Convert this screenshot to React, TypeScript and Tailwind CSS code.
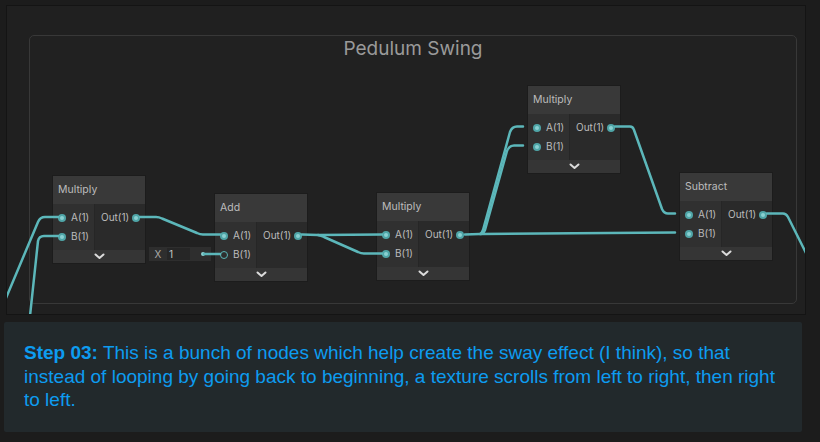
import React from "react";

const Dot = () => (
  <span className="flex items-center justify-center w-[8px] h-[8px] rounded-full bg-[#4fa5a7]">
    <span className="w-[4px] h-[4px] rounded-full bg-[#8ad0d1]" />
  </span>
);

const Hollow = () => <span className="w-[8px] h-[8px] rounded-full border-[1.5px] border-[#5bb5b7] bg-[#2e2e2e]" />;

const Chevron = () => (
  <svg width="11" height="7" viewBox="0 0 11 7">
    <path d="M1.5 1.5 L5.5 5 L9.5 1.5" fill="none" stroke="#dcdcdc" strokeWidth="2" strokeLinecap="round" strokeLinejoin="round" />
  </svg>
);

type NodeProps = { title: string; className: string; hollowB?: boolean };

const Node = ({ title, className, hollowB }: NodeProps) => (
  <div className={`absolute w-[94px] border border-[#1c1c1c] text-[#bcbcbc] ${className}`}>
    <div className="h-[28px] bg-[#393939] flex items-center pl-[5px] text-[10.5px]">{title}</div>
    <div className="flex text-[10px]">
      <div className="w-[42px] bg-[#303030] py-[4px] border-r border-[#262626]">
        <div className="h-[19px] flex items-center pl-[5px] gap-[5px]">
          <Dot />
          <span>A(1)</span>
        </div>
        <div className="h-[19px] flex items-center pl-[5px] gap-[5px]">
          {hollowB ? <Hollow /> : <Dot />}
          <span>B(1)</span>
        </div>
      </div>
      <div className="flex-1 bg-[#2a2a2a] py-[4px]">
        <div className="h-[19px] flex items-center pl-[6px] pr-[5px]">
          <span>Out(1)</span>
          <span className="ml-auto">
            <Dot />
          </span>
        </div>
      </div>
    </div>
    <div className="h-[13px] bg-[#353535] flex items-center justify-center">
      <Chevron />
    </div>
  </div>
);

export default function App() {
  const wire = "#5cb7ba";
  return (
    <div className="w-[820px] h-[442px] bg-[#1c1c1c] pt-[5px] flex flex-col font-['Inter',sans-serif]">
      <div className="relative ml-[6px] w-[800px] h-[310px] border border-[#141414] bg-[#202020] overflow-hidden">
        <div className="ml-[22px] mt-[29px] w-[768px] h-[269px] border border-[#383838] rounded-[5px] bg-[#212121] pt-[3px] text-center text-[19px] leading-[20px] text-[#9a9a9a]">
          Pedulum Swing
        </div>

        <Node title="Multiply" className="left-[45px] top-[169px]" />
        <Node title="Add" className="left-[207px] top-[187px]" hollowB />
        <Node title="Multiply" className="left-[369px] top-[186px]" />
        <Node title="Multiply" className="left-[520px] top-[79px]" />
        <Node title="Subtract" className="left-[672px] top-[166px]" />

        <div className="absolute left-[142px] top-[241px] w-[62px] h-[14px] bg-[#2e2e2e] flex items-center text-[10px] text-[#aaaaaa]">
          <span className="w-[18px] text-center">X</span>
          <span className="w-[23px] h-[12px] bg-[#262626] pl-[2px] leading-[12px] text-[#c4c4c4]">1</span>
          <span className="ml-auto mr-[6px] w-[4px] h-[4px] rounded-full bg-[#8ad0d1]" />
        </div>

        <svg className="absolute left-0 top-0 pointer-events-none" width="798" height="308" viewBox="7 6 798 308">
          <g fill="none" stroke={wire} strokeWidth="2.5" strokeLinecap="round" strokeLinejoin="round">
            <path d="M6 298 L38 222 Q40 217 45 217 L58 217" />
            <path d="M30 316 L38 241 Q39 236 44 236 L58 236" />
            <path d="M140 217 L156 217 Q159 217 162 218.5 L197 233 Q200 234.5 203 234.5 L220 234.5" />
            <path d="M204 254 L220 254" />
            <path d="M302 234.5 L318 235 L382 234.5" />
            <path d="M318 235 Q321 235.5 324 237 L358 252 Q361 253.5 364 253.5 L382 253.5" />
            <path d="M465 234.5 L480 234 L675 232.5" />
            <path d="M480 234 Q482 233 483 230 L510 132 Q512 126.5 517 126.5 L523 126.5" />
            <path d="M481 234 Q484 233 485 230 L507 151 Q509 145.5 514 145.5 L523 145.5" />
            <path d="M615 126.5 L630 126.5 Q633 126.5 634 130 L662 209 Q664 213.5 668 213.5 L675 213.5" />
            <path d="M767 213.5 L783 213.5 Q786 213.5 788 217 L808 257" />
          </g>
        </svg>
      </div>

      <div className="ml-[4px] mt-[7px] w-[798px] h-[110px] bg-[#22292c] rounded-[2px] pl-[20px] pr-[14px] pt-[19px] text-[19px] leading-[23.5px] text-[#0d9cf0] font-['Liberation_Sans',Arial,sans-serif]">
        <div className="flex gap-[5px] whitespace-nowrap">
          <span className="font-bold">Step 03:</span>
          <span>This is a bunch of nodes which help create the sway effect (I think), so that</span>
        </div>
        <div className="whitespace-nowrap">instead of looping by going back to beginning, a texture scrolls from left to right, then right</div>
        <div>to left.</div>
      </div>
    </div>
  );
}
